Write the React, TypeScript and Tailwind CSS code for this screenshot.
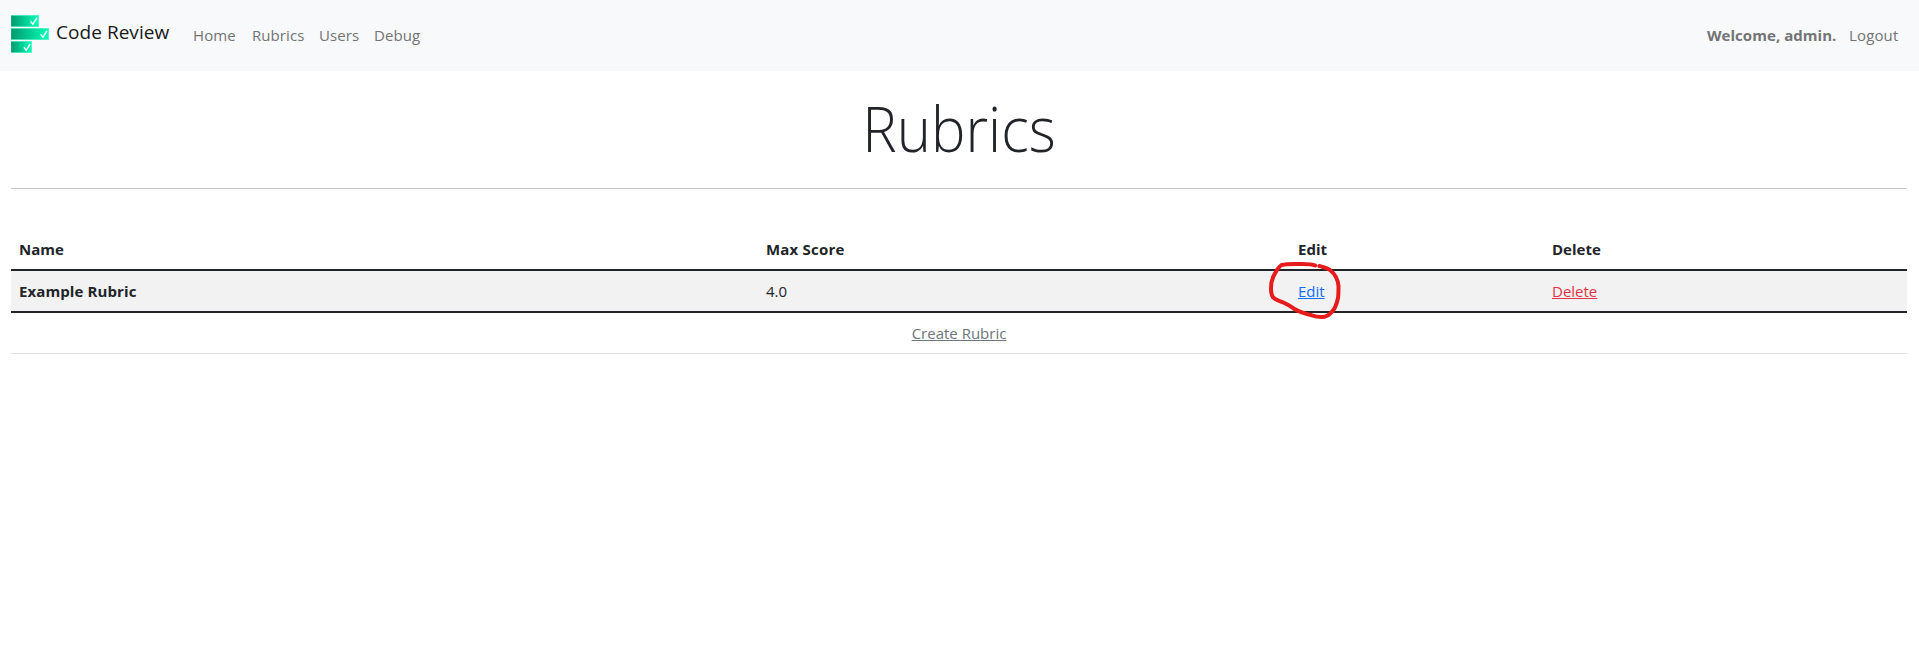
function Logo() {
  return (
    <svg width="38" height="38" viewBox="0 0 38 38" className="block" aria-hidden="true">
      <defs>
        <linearGradient id="bar" x1="0" x2="1" y1="0" y2="0">
          <stop offset="0" stopColor="#03996f" />
          <stop offset="1" stopColor="#00ffb8" />
        </linearGradient>
      </defs>
      <g fill="url(#bar)" stroke="#35efbd" strokeOpacity="0.6" strokeWidth="0.8">
        <rect x="0" y="0.4" width="27.6" height="11.2" />
        <rect x="0" y="13.4" width="37.6" height="11.2" />
        <rect x="0" y="26.4" width="20.6" height="11.2" />
      </g>
      <g fill="none" stroke="#fff" strokeWidth="1.4">
        <path d="M19.6 6.2l2.3 3 4-6.2" />
        <path d="M29.6 19.2l2.3 3 4-6.2" />
        <path d="M12.9 32.2l2.3 3 4-6.2" />
      </g>
    </svg>
  );
}

export default function App() {
  return (
    <div className="min-h-[669px] bg-white font-['Open_Sans','Noto_Sans',sans-serif] text-[15px] leading-6 text-[#212529]">
      <nav className="flex h-[71px] items-center bg-[#f8f9fa] pb-[3px] pl-[11px] pr-[19px] text-[#737475]">
        <a className="flex items-center text-[19px] text-[#19191a]" href="#">
          <Logo />
          <span className="ml-[7px] -mt-[5px] w-[114px] whitespace-nowrap tracking-[0.05px]">Code Review</span>
        </a>
        <div className="ml-[23px] mt-px flex whitespace-nowrap tracking-[0.08px]">
          <a className="w-[59px]" href="#">Home</a>
          <a className="w-[67px]" href="#">Rubrics</a>
          <a className="w-[55px]" href="#">Users</a>
          <a href="#">Debug</a>
        </div>
        <div className="ml-auto mt-px flex whitespace-nowrap">
          <b className="w-[142px] tracking-[0.05px]">Welcome, admin.</b>
          <a className="w-[51px] tracking-[0.15px]" href="#">Logout</a>
        </div>
      </nav>
      <main className="pl-[11px] pr-3">
        <h1 className="scale-x-[0.92] pt-[18px] text-center text-[63px] font-light leading-[77px]">Rubrics</h1>
        <hr className="mt-[22px] border-[#c8c9ca]" />
        <table className="mt-[39px] w-full table-fixed border-collapse text-left">
          <colgroup>
            <col className="w-[747px]" />
            <col className="w-[532px]" />
            <col className="w-[254px]" />
            <col />
          </colgroup>
          <thead>
            <tr className="h-[42px] border-b-2 border-[#212529]">
              <th className="px-2">Name</th>
              <th className="px-2 tracking-[0.2px]">Max Score</th>
              <th className="px-2">Edit</th>
              <th className="px-2">Delete</th>
            </tr>
          </thead>
          <tbody>
            <tr className="h-[42px] border-b-2 border-[#212529] bg-[#f2f2f2]">
              <th className="px-2 tracking-[0.1px]">Example Rubric</th>
              <td className="px-2">4.0</td>
              <td className="px-2">
                <span className="relative inline-block">
                  <a className="text-[#0d6efd] underline" href="#">Edit</a>
                  <svg className="pointer-events-none absolute -left-[29px] -top-[20px]" width="74" height="62" viewBox="0 0 74 62" fill="none" stroke="#e71b1b" strokeWidth="4" strokeLinecap="round" strokeLinejoin="round" aria-hidden="true">
                    <path d="M50.300 7C54 8 58 9 61 11C66 15 69 21 69.500 27C69.500 31 69.500 36 69 39C67.500 46 66 50 62.700 53C60 56.500 57 58 52.700 58C49 58 46 57.500 42.700 56.300C37 55 31 53.500 26 50.300C22 47.500 19 45.500 16 44.300C11 42 7 41.500 4.300 38.700C2 36 2 33 2 29.300C2 25 2.800 21 4.300 17.700C7 12 9 8 12.700 6C18 4.500 27 5 32.700 5C38 5 43 5 46.200 6.500" />
                  </svg>
                </span>
              </td>
              <td className="px-2"><a className="text-[#dc3545] underline" href="#">Delete</a></td>
            </tr>
            <tr className="h-[41px] border-b border-[#dee2e6]">
              <td className="px-2 text-center" colSpan={4}><a className="text-[#6c757d] underline" href="#">Create Rubric</a></td>
            </tr>
          </tbody>
        </table>
      </main>
    </div>
  );
}
